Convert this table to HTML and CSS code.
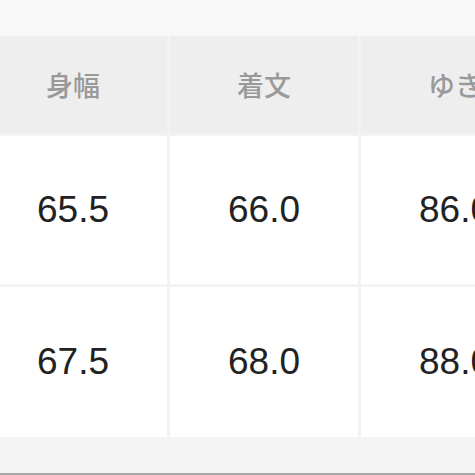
FILE: index.html
```html
<!DOCTYPE html>
<html lang="ja">
<head>
<meta charset="utf-8">
<link rel="stylesheet" href="styles.css">
</head>
<body>
<div class="page">
  <div class="top-band"></div>
  <div class="size-table">
    <div class="cell head">身幅</div>
    <div class="cell head">着文</div>
    <div class="cell head">ゆき</div>
    <div class="cell num">65.5</div>
    <div class="cell num">66.0</div>
    <div class="cell num">86.0</div>
    <div class="cell num">67.5</div>
    <div class="cell num">68.0</div>
    <div class="cell num">88.0</div>
  </div>
  <div class="bottom-band"></div>
</div>
</body>
</html>
```

FILE: styles.css
```css
html, body {
  margin: 0;
  padding: 0;
  background: #f7f7f7;
  overflow: hidden;
}
.page {
  width: 475px;
  height: 475px;
  overflow: hidden;
  display: flex;
  flex-direction: column;
}
.top-band {
  height: 36px;
  background: #f8f8f8;
  flex: none;
}
.size-table {
  display: grid;
  grid-template-columns: 188px 188px 188px;
  grid-template-rows: 97px 148px 150px;
  gap: 3px;
  margin-left: -21px;
  width: 570px;
  background: #f3f3f3;
  flex: none;
}
.cell {
  display: flex;
  align-items: center;
  justify-content: center;
}
.head {
  background: #eeeeee;
  color: #999999;
  font-family: "Noto Sans CJK JP", "Noto Sans", sans-serif;
  font-size: 27px;
  font-weight: 500;
  white-space: nowrap;
}
.num {
  background: #ffffff;
  color: #222222;
  font-family: "Liberation Sans", Arial, sans-serif;
  font-size: 37px;
  white-space: nowrap;
}
.bottom-band {
  flex: 1;
  background: #f4f4f4;
  border-bottom: 2px solid #a8a8a8;
}
```
